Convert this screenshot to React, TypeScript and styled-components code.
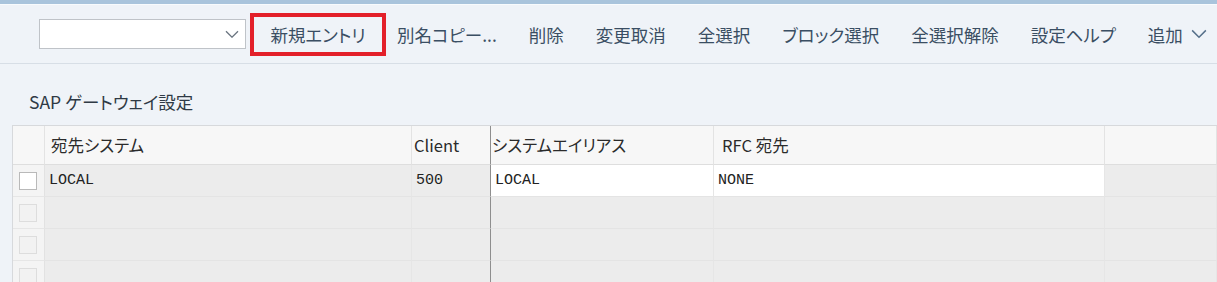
import { FC } from 'react';
import styled, { createGlobalStyle } from 'styled-components';

const GlobalStyle = createGlobalStyle`
  html, body {
    margin: 0;
    padding: 0;
    background: #eff3f8;
    overflow: hidden;
  }
  body {
    font-family: "Noto Sans CJK JP", "Noto Sans", sans-serif;
    font-feature-settings: "palt";
  }
`;

const Page = styled.div`
  width: 1217px;
  height: 282px;
  overflow: hidden;
  border-top: 4px solid #a9c4dc;
  box-sizing: border-box;
`;

const Toolbar = styled.div`
  height: 60px;
  display: flex;
  align-items: center;
  padding-left: 39px;
  border-bottom: 1px solid #d7dee6;
  border-top: 1px solid #f8fbfd;
  box-sizing: border-box;
  & > * {
    flex-shrink: 0;
  }
`;

const Select = styled.div`
  width: 207px;
  height: 30px;
  box-sizing: border-box;
  background: #fff;
  border: 1px solid #bfc3c8;
  display: flex;
  align-items: center;
  justify-content: flex-end;
  padding-right: 6px;
  margin-right: 4px;
`;

const ToolButton = styled.button<{ $marked?: boolean }>`
  font-family: inherit;
  font-feature-settings: "palt";
  font-size: 17.5px;
  color: #3a4e63;
  background: transparent;
  border: ${(p) => (p.$marked ? '4px solid #e3202a' : 'none')};
  height: ${(p) => (p.$marked ? '43px' : 'auto')};
  width: ${(p) => (p.$marked ? '136px' : 'auto')};
  padding: ${(p) => (p.$marked ? '0' : '0 16px')};
  margin-right: ${(p) => (p.$marked ? '-5px' : '0')};
  display: flex;
  align-items: center;
  justify-content: center;
  gap: 8px;
  white-space: nowrap;
  cursor: pointer;
  box-sizing: border-box;
`;

const Title = styled.div`
  padding: 24px 0 0 29px;
  height: 61px;
  box-sizing: border-box;
  font-size: 17.5px;
  color: #2f3a45;
  line-height: 28px;
`;

const Table = styled.div`
  margin-left: 12px;
  display: grid;
  grid-template-columns: 32px 367px 79px 223px 391px 1fr;
  border-top: 1px solid #d7d9dc;
  border-left: 1px solid #d7d9dc;
`;

const HeadCell = styled.div`
  height: 39px;
  box-sizing: border-box;
  background: #f7f7f7;
  border-bottom: 1px solid #dedede;
  border-right: 1px solid #e3e3e3;
  font-size: 16.5px;
  color: #2b2b2b;
  display: flex;
  align-items: center;
  padding-left: 6px;
  white-space: nowrap;
  &:nth-child(3) {
    padding-left: 2px;
    border-right: 1px solid #8e8e8e;
  }
  &:nth-child(4) {
    padding-left: 1px;
  }
  &:nth-child(5) {
    padding-left: 8px;
  }
`;

const Cell = styled.div<{ $edit?: boolean; $divider?: boolean }>`
  height: 32px;
  box-sizing: border-box;
  background: ${(p) => (p.$edit ? '#ffffff' : '#ececec')};
  border-bottom: 1px solid #e4e4e4;
  border-right: 1px solid ${(p) => (p.$divider ? '#8e8e8e' : '#e6e6e6')};
  font-family: "Liberation Mono", monospace;
  font-size: 15px;
  color: #222;
  display: flex;
  align-items: center;
  padding-left: 4px;
`;

const SelectCell = styled.div`
  height: 32px;
  box-sizing: border-box;
  background: #f4f4f4;
  border-bottom: 1px solid #e6e6e6;
  border-right: 1px solid #e2e2e2;
  display: flex;
  align-items: center;
  justify-content: center;
`;

const Check = styled.span<{ $enabled?: boolean }>`
  width: 18px;
  height: 18px;
  box-sizing: border-box;
  background: ${(p) => (p.$enabled ? '#fff' : '#f2f2f2')};
  border: 1px solid ${(p) => (p.$enabled ? '#b9b9b9' : '#dddddd')};
  margin-right: 2px;
`;

const Chevron: FC<{ color?: string; size?: number }> = ({ color = '#6a7580', size = 14 }) => (
  <svg width={size} height={size * 0.6} viewBox="0 0 14 8" fill="none">
    <path d="M1 1l6 6 6-6" stroke={color} strokeWidth="1.3" />
  </svg>
);

const tools = ['別名コピー...', '削除', '変更取消', '全選択', 'ブロック選択', '全選択解除', '設定ヘルプ'];

const rows = [
  { system: 'LOCAL', client: '500', alias: 'LOCAL', rfc: 'NONE', filled: true },
  { system: '', client: '', alias: '', rfc: '', filled: false },
  { system: '', client: '', alias: '', rfc: '', filled: false },
  { system: '', client: '', alias: '', rfc: '', filled: false },
];

const Row: FC<{ system: string; client: string; alias: string; rfc: string; filled: boolean }> = ({
  system,
  client,
  alias,
  rfc,
  filled,
}) => (
  <>
    <SelectCell>
      <Check $enabled={filled} />
    </SelectCell>
    <Cell>{system}</Cell>
    <Cell $divider>{client}</Cell>
    <Cell $edit={filled}>{alias}</Cell>
    <Cell $edit={filled}>{rfc}</Cell>
    <Cell />
  </>
);

export default function App() {
  return (
    <>
      <GlobalStyle />
      <Page>
        <Toolbar>
          <Select>
            <Chevron />
          </Select>
          <ToolButton $marked>新規エントリ</ToolButton>
          {tools.map((t) => (
            <ToolButton key={t}>{t}</ToolButton>
          ))}
          <ToolButton>
            追加
            <Chevron color="#56708a" size={16} />
          </ToolButton>
        </Toolbar>
        <Title>SAP ゲートウェイ設定</Title>
        <Table>
          <HeadCell />
          <HeadCell>宛先システム</HeadCell>
          <HeadCell>Client</HeadCell>
          <HeadCell>システムエイリアス</HeadCell>
          <HeadCell>RFC 宛先</HeadCell>
          <HeadCell />
          {rows.map((r, i) => (
            <Row key={i} {...r} />
          ))}
        </Table>
      </Page>
    </>
  );
}
